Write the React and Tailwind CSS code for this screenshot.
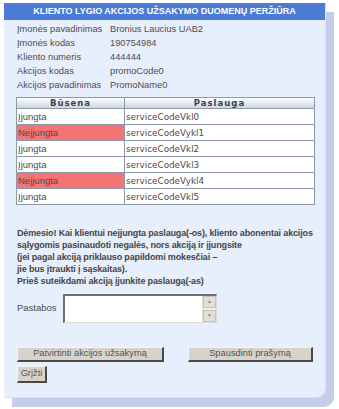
import React from 'react';

const info = [
  ['Įmonės pavadinimas', 'Bronius Laucius UAB2'],
  ['Įmonės kodas', '190754984'],
  ['Kliento numeris', '444444'],
  ['Akcijos kodas', 'promoCode0'],
  ['Akcijos pavadinimas', 'PromoName0'],
];

const services = [
  { on: true, code: 'serviceCodeVkl0' },
  { on: false, code: 'serviceCodeVykl1' },
  { on: true, code: 'serviceCodeVkl2' },
  { on: true, code: 'serviceCodeVkl3' },
  { on: false, code: 'serviceCodeVykl4' },
  { on: true, code: 'serviceCodeVkl5' },
];

const btn =
  'h-[15px] bg-[#d7d3cb] border-t border-l border-t-[#f4f4f4] border-l-[#f4f4f4] border-r-2 border-b-2 border-r-[#4a4a4a] border-b-[#4a4a4a] text-[9.3px] text-[#555] leading-none';

export default function App() {
  return (
    <div className="w-[339px] h-[409px] bg-white pt-[3px] pl-[4px] font-['Liberation_Sans',Arial,sans-serif] text-[9.3px] text-[#4d4d4d]">
      <div className="w-[322px] h-[395px] bg-[#e7effc] rounded-br-[10px] shadow-[8px_9px_0_#c2ceeb] border-r border-b border-[#d9e2f6]">
        {/* HEADER */}
        <div className="h-[17px] bg-[#4b7bd4] text-white font-bold text-[9px] flex items-center justify-center">
          KLIENTO LYGIO AKCIJOS UŽSAKYMO DUOMENŲ PERŽIŪRA
        </div>

        <div className="px-[12px] pt-[3px]">
          {/* INFO */}
          <div className="flex flex-col">
            {info.map(([k, v]) => (
              <div key={k} className="flex h-[14px] items-center whitespace-nowrap">
                <span className="w-[94px] pl-[1px]">{k}</span>
                <span>{v}</span>
              </div>
            ))}
          </div>

          {/* TABLE */}
          <table className="mt-[4px] w-[299px] border-collapse border border-[#8d99aa] text-[#4d4d4d]">
            <thead>
              <tr className="bg-gradient-to-b from-[#ffffff] to-[#c5d1e3]">
                <th className="w-[108px] h-[11px] p-0 border border-[#8d99aa] font-['DejaVu_Sans',sans-serif] text-[8.5px] font-bold tracking-[1px] text-[#3a4458] leading-[10px]">Būsena</th>
                <th className="h-[11px] p-0 border border-[#8d99aa] font-['DejaVu_Sans',sans-serif] text-[8.5px] font-bold tracking-[1px] text-[#3a4458] leading-[10px]">Paslauga</th>
              </tr>
            </thead>
            <tbody>
              {services.map((s) => (
                <tr key={s.code} className="bg-white">
                  <td className={`h-[16px] p-0 pl-[1px] border border-[#8d99aa] text-[9.5px] leading-[14px] ${s.on ? '' : 'bg-[#f27474]'}`}>
                    {s.on ? 'Įjungta' : 'Neįjungta'}
                  </td>
                  <td className="h-[16px] p-0 pl-[1px] border border-[#8d99aa] font-['DejaVu_Sans',sans-serif] text-[8.8px] leading-[14px]">{s.code}</td>
                </tr>
              ))}
            </tbody>
          </table>

          {/* WARNING */}
          <div className="mt-[22px] pl-[1px] font-bold text-[9px] leading-[12px] text-[#454545] tracking-[-0.15px] whitespace-nowrap">
            <p>Dėmesio! Kai klientui neįjungta paslauga(-os), kliento abonentai akcijos</p>
            <p>sąlygomis pasinaudoti negalės, nors akciją ir įjungsite</p>
            <p>(jei pagal akciją priklauso papildomi mokesčiai –</p>
            <p>jie bus įtraukti į sąskaitas).</p>
            <p>Prieš suteikdami akciją įjunkite paslaugą(-as)</p>
          </div>

          {/* PASTABOS */}
          <div className="mt-[7px] flex items-center">
            <span className="w-[47px] pl-[1px] text-[9.5px]">Pastabos</span>
            <div className="flex w-[154px] h-[29px] bg-white border-l-2 border-t-2 border-l-[#6e6e6e] border-t-[#6e6e6e] border-r border-b border-r-[#dcdcdc] border-b-[#dcdcdc]">
              <div className="flex-1" />
              <div className="w-[14px] flex flex-col justify-between bg-[#eeede8] border-l border-[#e0dfd8]">
                <div className="h-[12px] bg-[#e2e0d8] border border-[#c4c2ba] flex items-center justify-center text-[5px] text-[#8a8a8a]">▲</div>
                <div className="h-[12px] bg-[#e2e0d8] border border-[#c4c2ba] flex items-center justify-center text-[5px] text-[#8a8a8a]">▼</div>
              </div>
            </div>
          </div>

          {/* BUTTONS */}
          <div className="mt-[24px] flex gap-[24px] pl-[1px]">
            <button className={`w-[147px] ${btn}`}>Patvirtinti akcijos užsakymą</button>
            <button className={`w-[125px] ${btn}`}>Spausdinti prašymą</button>
          </div>
          <div className="mt-[4px] pl-[1px]">
            <button className={`w-[30px] h-[17px] ${btn}`}>Grįžti</button>
          </div>
        </div>
      </div>
    </div>
  );
}
